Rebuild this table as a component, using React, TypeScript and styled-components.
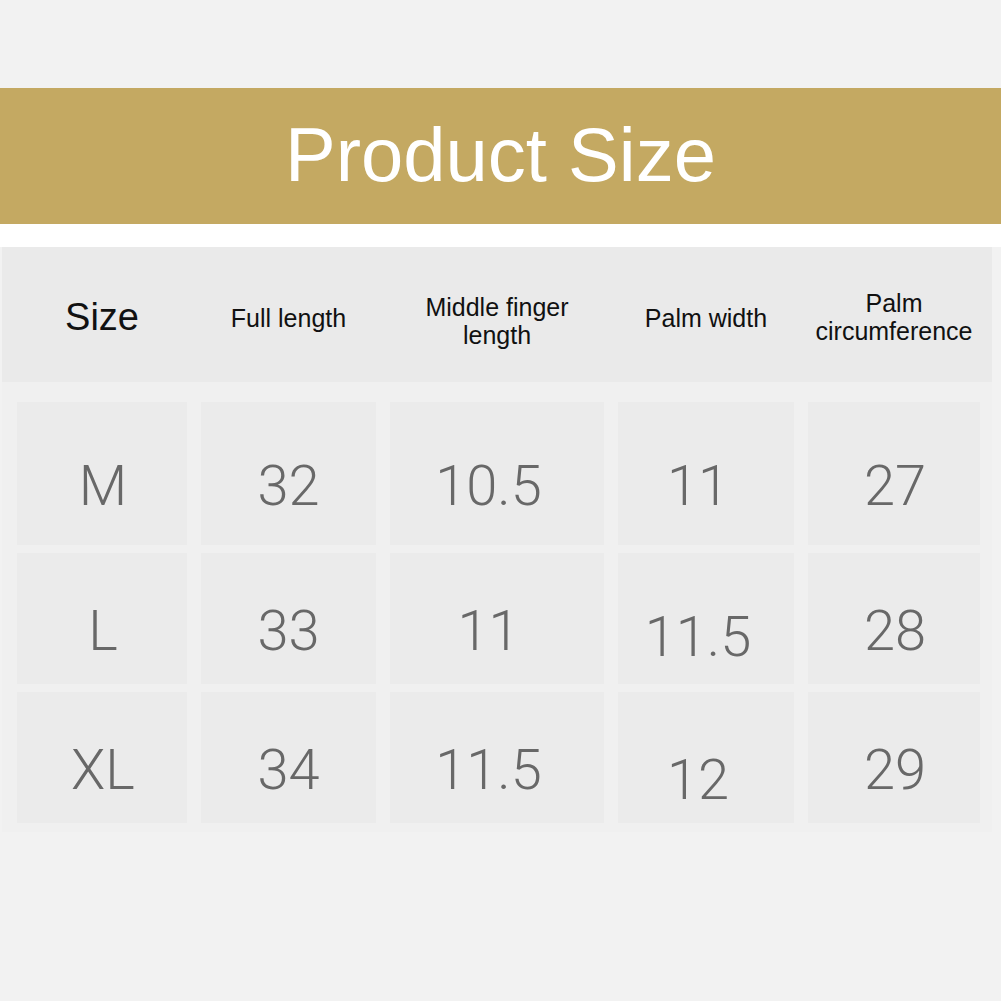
import styled, { createGlobalStyle } from "styled-components"

const GlobalStyle = createGlobalStyle`
  html, body {
    margin: 0;
    padding: 0;
    background: #f2f2f2;
  }
`

const columns = "170px 175px 214px 176px 172px"

const headers = [
  { label: "Size", big: true },
  { label: "Full length", shift: 3 },
  { label: "Middle finger\nlength", shift: 8 },
  { label: "Palm width", shift: 3 },
  { label: "Palm\ncircumference" },
]

const rows = [
  ["M", "32", "10.5", "11", "27"],
  ["L", "33", "11", "11.5", "28"],
  ["XL", "34", "11.5", "12", "29"],
]

// values in the middle columns sit a little left of centre in the original
const nudges = [2, 0, -17, -16, 2]

// a couple of values sit lower in their cells in the original
const dropped: Record<string, number> = { "1-3": 6, "2-3": 10 }

const App = (): JSX.Element => {
  return (
    <Page>
      <GlobalStyle />
      <TopGap />
      <Banner>Product Size</Banner>
      <WhiteGap />

      <Table>
        <HeaderRow>
          {headers.map((h) => (
            <HeaderCell key={h.label} big={h.big} shift={h.shift}>
              {h.label}
            </HeaderCell>
          ))}
        </HeaderRow>

        <Body>
          {rows.map((row, r) =>
            row.map((value, c) => (
              <Cell key={`${r}-${c}`}>
                <Value drop={dropped[`${r}-${c}`] ?? 0} nudge={nudges[c]}>
                  {value}
                </Value>
              </Cell>
            ))
          )}
        </Body>
      </Table>
    </Page>
  )
}

export default App

const Page = styled.div`
  width: 1001px;
  min-height: 1001px;
  background: #f2f2f2;
  font-family: "Liberation Sans", Arial, sans-serif;
`

const TopGap = styled.div`
  height: 88px;
`

const Banner = styled.div`
  height: 136px;
  background: #c4a962;
  color: #ffffff;
  font-family: "Liberation Sans", Arial, sans-serif;
  font-size: 76px;
  display: flex;
  align-items: center;
  justify-content: center;
  padding-bottom: 4px;
  box-sizing: border-box;
`

const WhiteGap = styled.div`
  height: 23px;
  background: #ffffff;
`

const Table = styled.div`
  margin: 0 9px 0 2px;
  background: #f0f0f0;
`

const HeaderRow = styled.div`
  display: grid;
  grid-template-columns: ${columns};
  column-gap: 14px;
  height: 135px;
  padding: 0 12px 0 15px;
  background: #eaeaea;
`

const HeaderCell = styled.div<{ big?: boolean; shift?: number }>`
  display: flex;
  align-items: center;
  justify-content: center;
  text-align: center;
  white-space: pre-line;
  color: #111111;
  font-size: ${(p) => (p.big ? "38px" : "25px")};
  line-height: 28px;
  padding-top: ${(p) => 4 + (p.shift ?? 0)}px;
`

const Body = styled.div`
  display: grid;
  grid-template-columns: ${columns};
  grid-template-rows: 143px 131px 131px;
  column-gap: 14px;
  row-gap: 8px;
  padding: 20px 12px 9px 15px;
`

const Cell = styled.div`
  background: #ebebeb;
  display: flex;
  align-items: center;
  justify-content: center;
`

const Value = styled.span<{ drop: number; nudge: number }>`
  font-family: Roboto, "Liberation Sans", sans-serif;
  font-weight: 300;
  font-size: 56px;
  color: #686868;
  line-height: 1;
  padding-top: ${(p) => 24 + p.drop * 2}px;
  margin-left: ${(p) => (p.nudge < 0 ? 0 : p.nudge)}px;
  margin-right: ${(p) => (p.nudge < 0 ? -p.nudge : 0)}px;
`
